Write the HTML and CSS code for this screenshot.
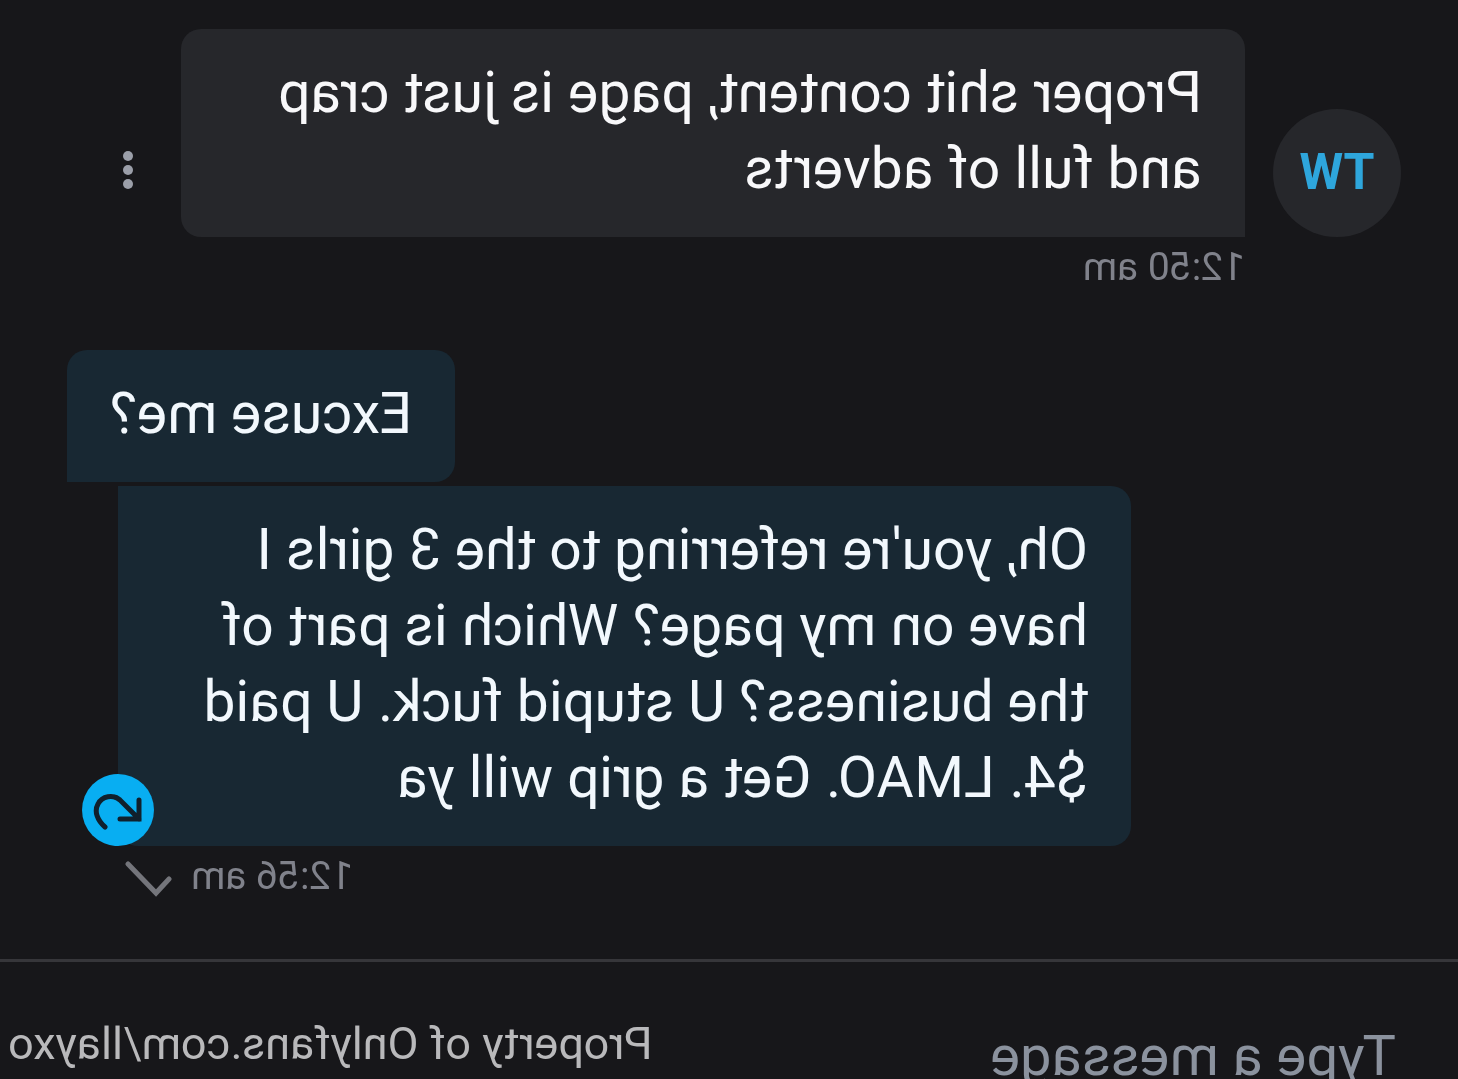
FILE: index.html
```html
<!DOCTYPE html>
<html lang="en">
<head>
<meta charset="utf-8">
<meta name="viewport" content="width=device-width, initial-scale=1">
<title>Messages</title>
<link rel="stylesheet" href="styles.css">
</head>
<body>
<div class="chat">
  <main class="thread">
    <section class="received">
      <div class="avatar">TW</div>
      <p class="bubble bubble-in">Proper shit content, page is just crap and full of adverts</p>
      <button class="menu" type="button" aria-label="Message options">
        <svg width="12" height="40" viewBox="0 0 12 40" fill="currentColor"><circle cx="6" cy="6" r="5"/><circle cx="6" cy="20" r="5"/><circle cx="6" cy="34" r="5"/></svg>
      </button>
      <time class="time time-in">12:50 am</time>
    </section>
    <section class="sent">
      <p class="bubble bubble-out">Excuse me?</p>
      <div class="latest">
        <p class="bubble bubble-long">Oh, you're referring to the 3 girls I have on my page? Which is part of the business? U stupid fuck. U paid $4. LMAO. Get a grip will ya</p>
        <button class="unsend" type="button" aria-label="Unsend message">
          <svg width="72" height="72" viewBox="0 0 72 72" fill="none" stroke="currentColor" stroke-width="5" stroke-linecap="round" stroke-linejoin="miter"><path d="M49 53C57 46 60 37 56 30C52 22 41 20 34 26L15 45M15 26V45H34"/></svg>
        </button>
      </div>
      <div class="status">
        <time class="time">12:56 am</time>
        <svg class="check" width="48" height="44" viewBox="0 0 48 44" fill="none" stroke="currentColor" stroke-width="5" stroke-linecap="round"><path d="M4 25L17 39L45 10"/></svg>
      </div>
    </section>
  </main>
  <footer class="composer">
    <input class="message-input" type="text" placeholder="Type a message" aria-label="Type a message">
    <span class="credit">Property of Onlyfans.com/llayxo</span>
  </footer>
</div>
</body>
</html>
```

FILE: styles.css
```css
* {
  box-sizing: border-box;
}

body {
  margin: 0;
  background: #17171a;
  font-family: Roboto, "Liberation Sans", sans-serif;
}

/* The whole conversation is shown flipped left to right. */
.chat {
  display: flex;
  flex-direction: column;
  height: 100vh;
  overflow: hidden;
  transform: scaleX(-1);
}

button {
  padding: 0;
  border: 0;
  background: none;
}

svg {
  display: block;
}

.thread {
  flex: none;
  padding: 29px 67px 53px 57px;
}

.received {
  display: grid;
  grid-template-columns: 128px 1fr auto;
  column-gap: 28px;
  padding-right: 55px;
}

.avatar {
  display: grid;
  place-items: center;
  align-self: end;
  height: 128px;
  padding-bottom: 2px;
  border-radius: 50%;
  background: #26272b;
  color: #2ea6dc;
  font-size: 50px;
  font-weight: 700;
}

.bubble {
  margin: 0;
  padding: 26px 43px 30px;
  border-radius: 20px;
  background: #182833;
  color: #f2f8fd;
  font-size: 57px;
  line-height: 76px;
}

.bubble-in {
  border-bottom-left-radius: 0;
  background: #26272b;
  color: #f8f8fa;
}

.menu {
  align-self: end;
  margin: 0 0 47px 19px;
  color: #9b9fa9;
}

.time {
  color: #80828b;
  font-size: 39px;
  line-height: 60px;
}

.time-in {
  grid-column: 2;
}

.sent {
  display: flex;
  flex-direction: column;
  align-items: flex-end;
  padding-top: 53px;
}

.bubble-out {
  border-bottom-right-radius: 0;
}

.latest {
  position: relative;
  max-width: 1013px;
  margin: 4px 51px 0 0;
}

.bubble-long {
  border-top-right-radius: 0;
}

.unsend {
  position: absolute;
  right: -36px;
  bottom: 0;
  border-radius: 50%;
  background: #08aef2;
  color: #10202d;
}

.status {
  display: flex;
  align-items: center;
  gap: 18px;
  margin-right: 58px;
}

.check {
  color: #74757b;
}

.composer {
  display: flex;
  flex: none;
  align-items: flex-start;
  gap: 40px;
  padding: 56px 8px 40px 62px;
  border-top: 3px solid #36363a;
}

.message-input {
  flex: 1;
  min-width: 0;
  height: 76px;
  padding: 0;
  border: 0;
  outline: 0;
  background: none;
  color: #f8f8fa;
  font: 56px/76px Roboto, "Liberation Sans", sans-serif;
}

.message-input::placeholder {
  color: #8b929e;
  opacity: 1;
}

.credit {
  color: #b9b9bb;
  font-size: 45px;
  line-height: 52px;
  white-space: nowrap;
}
```
